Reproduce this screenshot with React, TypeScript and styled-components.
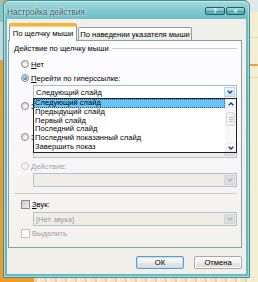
import React from "react";
import styled, { createGlobalStyle, css } from "styled-components";

const GlobalStyle = createGlobalStyle`
  html, body { margin: 0; padding: 0; }
  body { font-family: "Liberation Sans", Arial, sans-serif; }
`;

const Desktop = styled.div`
  width: 258px;
  height: 282px;
  box-sizing: border-box;
  padding-left: 3px;
  overflow: hidden;
  font-size: 7.6px;
  color: #000;
  background:
    linear-gradient(180deg, #86c6cb 0, #86c6cb 22px, #c9d6d3 22px, #c9d6d3 60px, transparent 60px) left top / 3px 100% no-repeat,
    linear-gradient(180deg, #dfe8ea 0, #dfe8ea 12px, #f6eed3 12px, #f6eed3 37px, #e2d6b4 37px, #e2d6b4 38px, #f6eed3 38px, #f6eed3 64px, #eea43a 64px, #eea43a 66px, #f6eed3 66px, #f6eed3 77px, #e2d6b4 77px, #e2d6b4 78px, #f6eed3 78px) right top / 8px 100% no-repeat,
    linear-gradient(90deg, #ef9b2b 0, #ef9b2b 34px, transparent 34px),
    repeating-linear-gradient(90deg, #f3e6c0 0, #f3e6c0 5px, #e6d29c 5px, #e6d29c 7px, #f8f0d8 7px, #f8f0d8 10px);
`;

const Window = styled.div`
  width: 247px;
  height: 278px;
  box-sizing: border-box;
  display: flex;
  flex-direction: column;
  border: 1px solid #3f8f98;
  border-radius: 6px 6px 0 0;
  padding: 0 3px 3px;
  background: linear-gradient(180deg, #a6dadd 0, #84cbd0 9px, #6cbec5 18px, #5db4bc 40%, #66bac1 100%);
  box-shadow: inset 0 0 0 1px rgba(255, 255, 255, 0.45);
`;

const TitleBar = styled.div`
  height: 18px;
  box-sizing: border-box;
  display: flex;
  align-items: center;
  justify-content: space-between;
  padding: 2px 1px 0 0;
`;

const Title = styled.span`
  font-size: 8.2px;
  color: #2f5466;
  text-shadow: 0 0 3px #ffffff, 0 0 2px #e8fbff;
  padding-top: 2px;
`;

const CaptionButtons = styled.div`
  display: flex;
  gap: 1px;
`;

const CaptionButton = styled.div<{ $w: number }>`
  width: ${(p) => p.$w}px;
  height: 8px;
  box-sizing: border-box;
  border: 1px solid #275c63;
  border-radius: 2px;
  background: linear-gradient(180deg, #a9dde0 0, #74c1c8 45%, #4ea6ae 55%, #5fb5bc 100%);
  color: #ffffff;
  font-size: 6px;
  line-height: 6px;
  font-weight: bold;
  text-align: center;
  font-family: "DejaVu Sans", sans-serif;
`;

const Client = styled.div`
  flex: 1;
  display: flex;
  flex-direction: column;
  background: #f0efe9;
  padding: 4px 4px 0 1px;
`;

const TabStrip = styled.div`
  height: 17px;
  display: flex;
  align-items: flex-end;
  padding-left: 1px;
  position: relative;
  z-index: 1;
`;

const Tab = styled.div<{ $active?: boolean; $w: number }>`
  width: ${(p) => p.$w}px;
  box-sizing: border-box;
  display: flex;
  align-items: center;
  justify-content: center;
  white-space: nowrap;
  border: 1px solid #919b9c;
  border-bottom: none;
  border-radius: 2px 2px 0 0;
  ${(p) =>
    p.$active
      ? css`
          height: 18px;
          margin-bottom: -1px;
          background: #ffffff;
          border-top: 3px solid #f5b43c;
          box-shadow: inset 0 1px 0 #ffd46a;
          padding-bottom: 1px;
        `
      : css`
          height: 13px;
          margin-left: 1px;
          background: linear-gradient(180deg, #ffffff 0, #f3f2ed 60%, #e9e8e2 100%);
        `}
`;

const Panel = styled.div`
  position: relative;
  height: 208px;
  box-sizing: border-box;
  border: 1px solid #8f9ca8;
  background: linear-gradient(180deg, #fdfcff 0%, #f9f7fa 40%, #f3f1ec 100%);
  padding: 2px 4px 0 5px;
  display: flex;
  flex-direction: column;
`;

const GroupHeader = styled.div`
  height: 10px;
  display: flex;
  align-items: center;
  gap: 3px;
  white-space: nowrap;
`;

const GroupLine = styled.div`
  flex: 1;
  height: 1px;
  background: #cfcec4;
`;

const OptionRow = styled.div<{ $mt?: number }>`
  height: 14px;
  display: flex;
  align-items: center;
  gap: 2px;
  padding-left: 7px;
  margin-top: ${(p) => p.$mt ?? 0}px;
  white-space: nowrap;
`;

const Label = styled.span<{ $disabled?: boolean }>`
  color: ${(p) => (p.$disabled ? "#a3a3a3" : "#000000")};
`;

const Mnemonic = styled.span`
  text-decoration: underline;
`;

const Radio = styled.span<{ $checked?: boolean; $disabled?: boolean }>`
  position: relative;
  flex: none;
  width: 8px;
  height: 8px;
  box-sizing: border-box;
  border-radius: 50%;
  border: 1px solid ${(p) => (p.$disabled ? "#c9c9c9" : "#8b8b8b")};
  background: ${(p) =>
    p.$disabled
      ? "#f4f4f4"
      : "radial-gradient(circle at 60% 65%, #ffffff 0, #e4e4e4 60%, #cfcfcf 100%)"};
  ${(p) =>
    p.$checked &&
    css`
      &::after {
        content: "";
        position: absolute;
        left: 1px;
        top: 1px;
        width: 4px;
        height: 4px;
        border-radius: 50%;
        background: radial-gradient(circle at 40% 35%, #a6dcff 0, #3a86cf 55%, #1a4f92 100%);
      }
    `}
`;

const Check = styled.span<{ $disabled?: boolean }>`
  flex: none;
  width: 9px;
  height: 9px;
  box-sizing: border-box;
  border: 1px solid ${(p) => (p.$disabled ? "#c4c4c4" : "#8e8f8f")};
  background: ${(p) =>
    p.$disabled ? "#ffffff" : "linear-gradient(135deg, #c9c9c9 0, #dedede 60%, #eeeeee 100%)"};
`;

const Combo = styled.div<{ $disabled?: boolean; $mt?: number }>`
  margin-left: 19px;
  margin-top: ${(p) => p.$mt ?? 0}px;
  height: 14px;
  box-sizing: border-box;
  border: 1px solid ${(p) => (p.$disabled ? "#aec1d6" : "#a2bbd6")};
  background: ${(p) => (p.$disabled ? "#efede6" : "#ffffff")};
  display: flex;
  align-items: center;
  padding-left: 2px;
  white-space: nowrap;
`;

const ComboText = styled.span<{ $disabled?: boolean }>`
  flex: 1;
  overflow: hidden;
  color: ${(p) => (p.$disabled ? "#9c9c9c" : "#000000")};
`;

const ComboButton = styled.span<{ $disabled?: boolean }>`
  flex: none;
  width: 11px;
  height: 10px;
  margin-right: 1px;
  box-sizing: border-box;
  display: flex;
  align-items: center;
  justify-content: center;
  border: 1px solid ${(p) => (p.$disabled ? "#d4d4d4" : "#b7d5e6")};
  background: ${(p) =>
    p.$disabled ? "#dedede" : "linear-gradient(180deg, #f2fafd 0, #dcf0fa 50%, #c6e5f5 100%)"};
`;

const FieldRow = styled.div`
  margin-left: 19px;
  margin-top: 1px;
  height: 14px;
  display: flex;
  gap: 4px;
`;

const Field = styled.div`
  flex: 1;
  box-sizing: border-box;
  border: 1px solid #a2bbd6;
  background: #ffffff;
`;

const SmallButton = styled.div`
  width: 46px;
  box-sizing: border-box;
  border: 1px solid #9a9a9a;
  background: #eeeeee;
`;

const Separator = styled.div`
  height: 1px;
  margin-top: 6px;
  background: #d0cfc6;
`;

const DropList = styled.div`
  position: absolute;
  left: 24px;
  top: 57px;
  width: 204px;
  height: 55px;
  box-sizing: border-box;
  border: 1px solid #222222;
  background: #ffffff;
  display: flex;
  z-index: 2;
`;

const Items = styled.div`
  flex: 1;
  display: flex;
  flex-direction: column;
  overflow: hidden;
`;

const Item = styled.div<{ $selected?: boolean }>`
  height: 8.8px;
  line-height: 8.8px;
  padding-left: 1px;
  white-space: nowrap;
  box-sizing: border-box;
  ${(p) =>
    p.$selected &&
    css`
      background: #69c5f6;
      outline: 1px dotted #2b5a86;
      outline-offset: -1px;
    `}
`;

const ScrollBar = styled.div`
  width: 11px;
  display: flex;
  flex-direction: column;
  align-items: center;
  background: #f7f7f7;
`;

const ScrollArrow = styled.div`
  width: 11px;
  height: 9px;
  display: flex;
  align-items: center;
  justify-content: center;
  box-sizing: border-box;
  border: 1px solid #ececec;
  background: linear-gradient(180deg, #fbfbfb 0, #eeeeee 100%);
`;

const Thumb = styled.div`
  width: 9px;
  height: 14px;
  margin-top: 4px;
  box-sizing: border-box;
  border: 1px solid #dadada;
  border-radius: 2px;
  background: linear-gradient(90deg, #f6f6f6 0, #ebebeb 100%);
  display: flex;
  flex-direction: column;
  align-items: center;
  justify-content: center;
  gap: 1px;
`;

const Grip = styled.span`
  width: 4px;
  height: 1px;
  background: #c4c4c4;
`;

const Spacer = styled.div`
  flex: 1;
`;

const ButtonRow = styled.div`
  display: flex;
  justify-content: flex-end;
  gap: 10px;
  margin-top: 8px;
`;

const DlgButton = styled.div<{ $default?: boolean }>`
  width: 48px;
  height: 13px;
  box-sizing: border-box;
  display: flex;
  align-items: center;
  justify-content: center;
  border-radius: 2px;
  border: 1px solid ${(p) => (p.$default ? "#5d9bd0" : "#a8a8a8")};
  background: linear-gradient(180deg, #fafafa 0, #f0f0f0 50%, #e4e4e4 51%, #dcdcdc 100%);
  box-shadow: ${(p) => (p.$default ? "inset 0 0 0 1px #bfe1f6" : "inset 0 0 0 1px #ffffff")};
`;

const Chevron = ({ up, color = "#1d3f74" }: { up?: boolean; color?: string }) => (
  <svg width="6" height="4" viewBox="0 0 6 4">
    <path
      d={up ? "M0.7 3.3 L3 1 L5.3 3.3" : "M0.7 0.7 L3 3 L5.3 0.7"}
      fill="none"
      stroke={color}
      strokeWidth="1.4"
    />
  </svg>
);

const items = [
  "Следующий слайд",
  "Предыдущий слайд",
  "Первый слайд",
  "Последний слайд",
  "Последний показанный слайд",
  "Завершить показ",
];

export default function App() {
  return (
    <>
      <GlobalStyle />
      <Desktop>
        <Window>
          <TitleBar>
            <Title>Настройка действия</Title>
            <CaptionButtons>
              <CaptionButton $w={20}>?</CaptionButton>
              <CaptionButton $w={19}>×</CaptionButton>
            </CaptionButtons>
          </TitleBar>
          <Client>
            <TabStrip>
              <Tab $active $w={68}>По щелчку мыши</Tab>
              <Tab $w={114}>По наведении указателя мыши</Tab>
            </TabStrip>
            <Panel>
              <GroupHeader>
                <span>Действие по щелчку мыши</span>
                <GroupLine />
              </GroupHeader>
              <OptionRow $mt={4}>
                <Radio />
                <Label>
                  <Mnemonic>Н</Mnemonic>ет
                </Label>
              </OptionRow>
              <OptionRow>
                <Radio $checked />
                <Label>
                  <Mnemonic>П</Mnemonic>ерейти по гиперссылке:
                </Label>
              </OptionRow>
              <Combo>
                <ComboText>Следующий слайд</ComboText>
                <ComboButton>
                  <Chevron />
                </ComboButton>
              </Combo>
              <OptionRow>
                <Radio />
                <Label>Запуск программы:</Label>
              </OptionRow>
              <FieldRow>
                <Field />
                <SmallButton />
              </FieldRow>
              <OptionRow $mt={2}>
                <Radio />
                <Label>Запуск макроса:</Label>
              </OptionRow>
              <Combo $disabled>
                <ComboText $disabled />
                <ComboButton $disabled>
                  <Chevron color="#b4b4b4" />
                </ComboButton>
              </Combo>
              <OptionRow $mt={1}>
                <Radio $disabled />
                <Label $disabled>Действие:</Label>
              </OptionRow>
              <Combo $disabled>
                <ComboText $disabled />
                <ComboButton $disabled>
                  <Chevron color="#b4b4b4" />
                </ComboButton>
              </Combo>
              <Separator />
              <OptionRow $mt={3}>
                <Check />
                <Label>
                  <Mnemonic>З</Mnemonic>вук:
                </Label>
              </OptionRow>
              <Combo $disabled $mt={1}>
                <ComboText $disabled>[Нет звука]</ComboText>
                <ComboButton $disabled>
                  <Chevron color="#b4b4b4" />
                </ComboButton>
              </Combo>
              <OptionRow>
                <Check $disabled />
                <Label $disabled>Выделить</Label>
              </OptionRow>

              <DropList>
                <Items>
                  {items.map((t, i) => (
                    <Item key={t} $selected={i === 0}>
                      {t}
                    </Item>
                  ))}
                </Items>
                <ScrollBar>
                  <ScrollArrow>
                    <Chevron up />
                  </ScrollArrow>
                  <Thumb>
                    <Grip />
                    <Grip />
                    <Grip />
                  </Thumb>
                  <Spacer />
                  <ScrollArrow>
                    <Chevron />
                  </ScrollArrow>
                </ScrollBar>
              </DropList>
            </Panel>
            <ButtonRow>
              <DlgButton $default>ОК</DlgButton>
              <DlgButton>Отмена</DlgButton>
            </ButtonRow>
          </Client>
        </Window>
      </Desktop>
    </>
  );
}
